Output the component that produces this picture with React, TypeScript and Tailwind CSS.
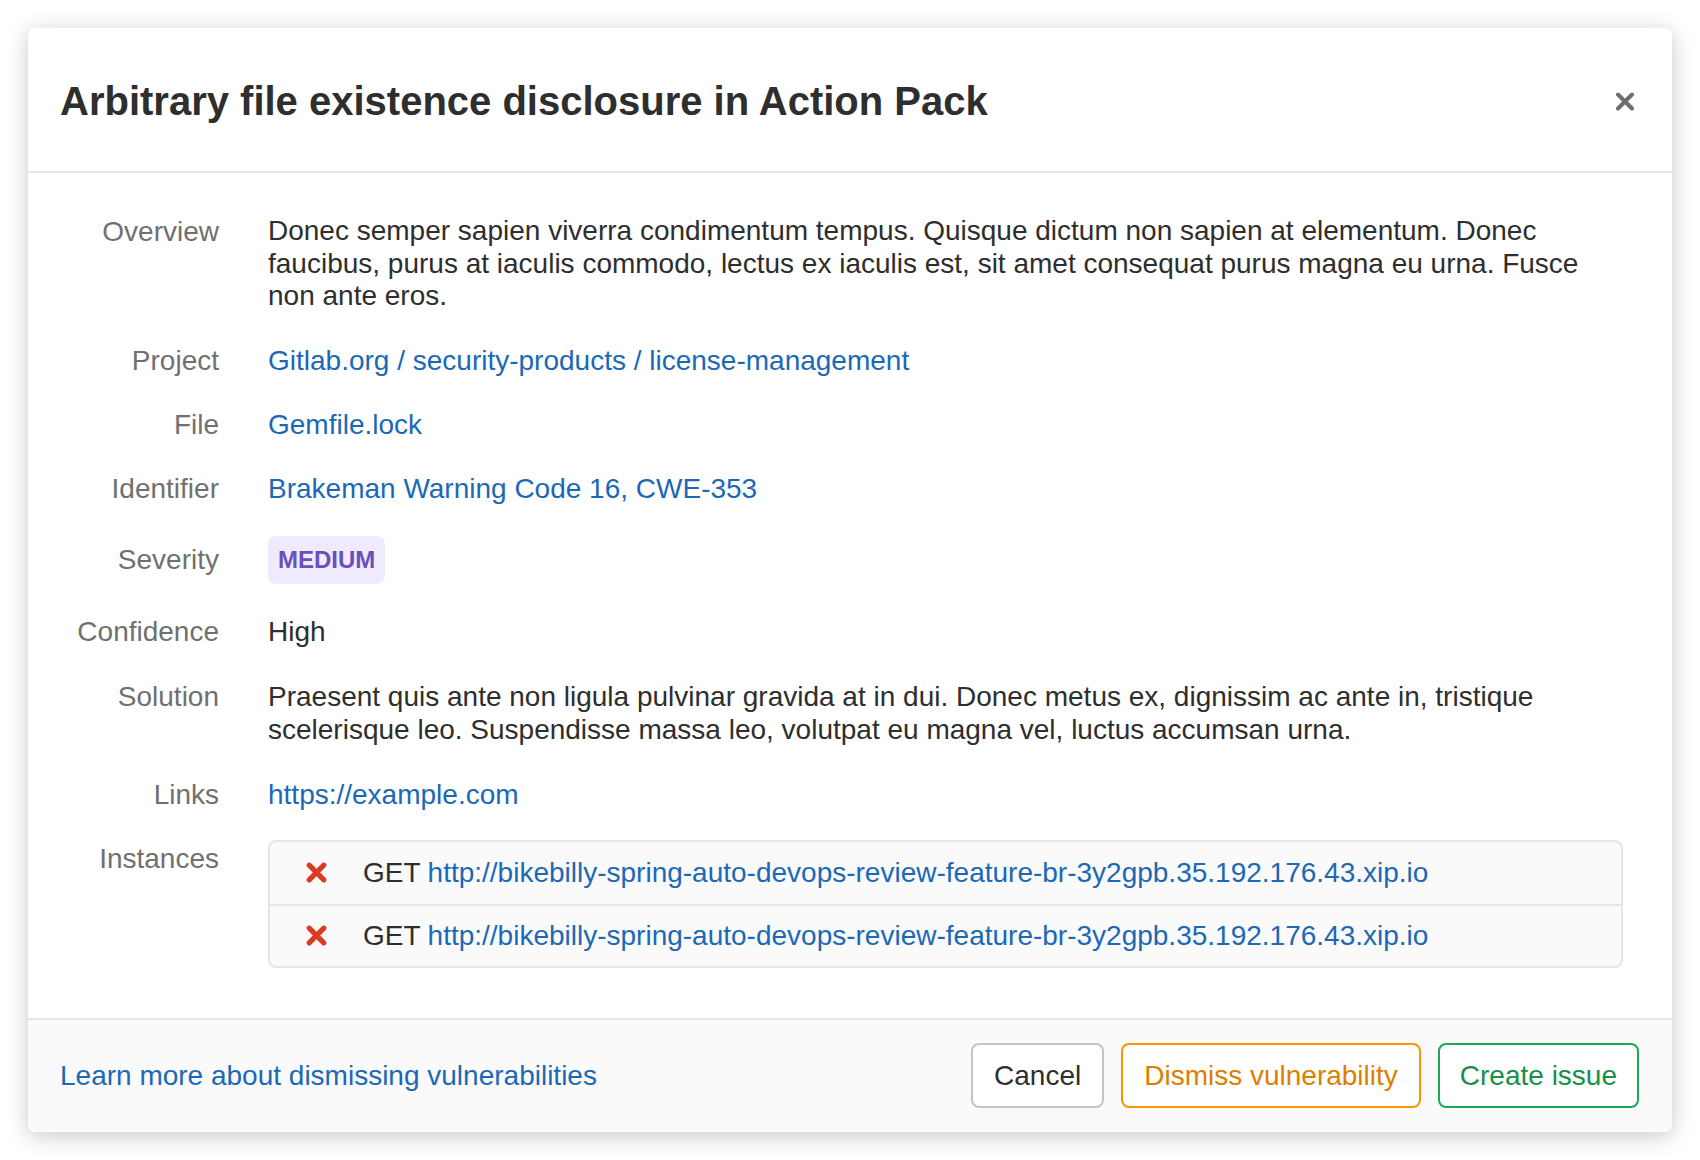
import React from 'react'

const rowLabel = 'w-[159px] shrink-0 text-right text-[#707070]'

function Row({ label, className = '', children }: { label: string; className?: string; children: React.ReactNode }) {
  return (
    <div className={`flex ${className}`}>
      <div className={rowLabel}>{label}</div>
      <div className="ml-[49px] min-w-0 flex-1">{children}</div>
    </div>
  )
}

function FailedIcon() {
  return (
    <svg width="23" height="23" viewBox="0 0 22 22" className="shrink-0">
      <path d="M4 4 L18 18 M18 4 L4 18" stroke="#db3b21" strokeWidth="5" strokeLinecap="round" />
    </svg>
  )
}

const url = 'http://bikebilly-spring-auto-devops-review-feature-br-3y2gpb.35.192.176.43.xip.io'

export default function App() {
  return (
    <main className="min-h-screen bg-white p-[28px] font-['Liberation_Sans',Arial,sans-serif] text-[28px] leading-[33px] text-[#2e2e2e]">
      <section className="overflow-hidden rounded-[7px] bg-white shadow-[0_4px_22px_rgba(0,0,0,0.22)]">
        <header className="flex h-[145px] items-center justify-between border-b-2 border-[#e5e5e5] pl-[32px] pr-[38px] pt-[3px]">
          <h1 className="text-[40px] font-bold leading-[48px] text-[#2e2e2e]">
            Arbitrary file existence disclosure in Action Pack
          </h1>
          <button className="flex h-[18px] w-[18px] items-center justify-center">
            <svg width="19" height="19" viewBox="0 0 18 18">
              <path d="M2 2 L16 16 M16 2 L2 16" stroke="#6e6e6e" strokeWidth="4" strokeLinecap="round" />
            </svg>
          </button>
        </header>

        <div className="flex flex-col gap-[31px] pb-[50px] pl-[32px] pr-[49px] pt-[42px]">
          <Row label="Overview">
            <p className="leading-[32.5px]">
              Donec semper sapien viverra condimentum tempus. Quisque dictum non sapien at elementum. Donec
              faucibus, purus at iaculis commodo, lectus ex iaculis est, sit amet consequat purus magna eu urna.
              Fusce non ante eros.
            </p>
          </Row>
          <Row label="Project">
            <a className="text-[#1b69b6]">Gitlab.org / security-products / license-management</a>
          </Row>
          <Row label="File">
            <a className="text-[#1b69b6]">Gemfile.lock</a>
          </Row>
          <Row label="Identifier">
            <a className="text-[#1b69b6]">Brakeman Warning Code 16</a>
            <span className="text-[#1b69b6]">, </span>
            <a className="text-[#1b69b6]">CWE-353</a>
          </Row>
          <div className="flex items-center">
            <div className={rowLabel}>Severity</div>
            <div className="ml-[49px]">
              <span className="inline-flex h-[48px] items-center rounded-[8px] bg-[#efebfc] px-[10px] text-[24px] font-bold text-[#6b4fbb]">
                MEDIUM
              </span>
            </div>
          </div>
          <Row label="Confidence">High</Row>
          <Row label="Solution" className="mt-[1px]">
            <p>
              Praesent quis ante non ligula pulvinar gravida at in dui. Donec metus ex, dignissim ac ante in,
              tristique scelerisque leo. Suspendisse massa leo, volutpat eu magna vel, luctus accumsan urna.
            </p>
          </Row>
          <Row label="Links" className="mt-[1px]">
            <a className="text-[#1b69b6]">https://example.com</a>
          </Row>
          <div className="-mt-[2px] flex">
            <div className={`${rowLabel} pt-[2px]`}>Instances</div>
            <ul className="ml-[49px] min-w-0 flex-1 overflow-hidden rounded-[8px] border-2 border-[#e5e5e5] bg-[#fafafa]">
              {[0, 1].map((i) => (
                <li
                  key={i}
                  className={`flex h-[62px] items-center pl-[35px] ${i > 0 ? 'border-t-2 border-[#e5e5e5]' : ''}`}
                >
                  <FailedIcon />
                  <span className="ml-[35px]">GET</span>
                  <a className="ml-[7px] text-[#1b69b6]">{url}</a>
                </li>
              ))}
            </ul>
          </div>
        </div>

        <footer className="flex h-[114px] items-center justify-between border-t-2 border-[#e5e5e5] bg-[#fafafa] pl-[32px] pr-[33px]">
          <a className="text-[#1b69b6]">Learn more about dismissing vulnerabilities</a>
          <div className="flex gap-[17px]">
            <button className="h-[65px] rounded-[8px] border-2 border-[#c4c4c4] bg-white px-[21px] text-[#2e2e2e]">
              Cancel
            </button>
            <button className="h-[65px] rounded-[8px] border-2 border-[#fc9403] bg-white px-[21px] text-[#de7e00]">
              Dismiss vulnerability
            </button>
            <button className="h-[65px] rounded-[8px] border-2 border-[#1aaa55] bg-white px-[20px] text-[#168f48]">
              Create issue
            </button>
          </div>
        </footer>
      </section>
    </main>
  )
}
